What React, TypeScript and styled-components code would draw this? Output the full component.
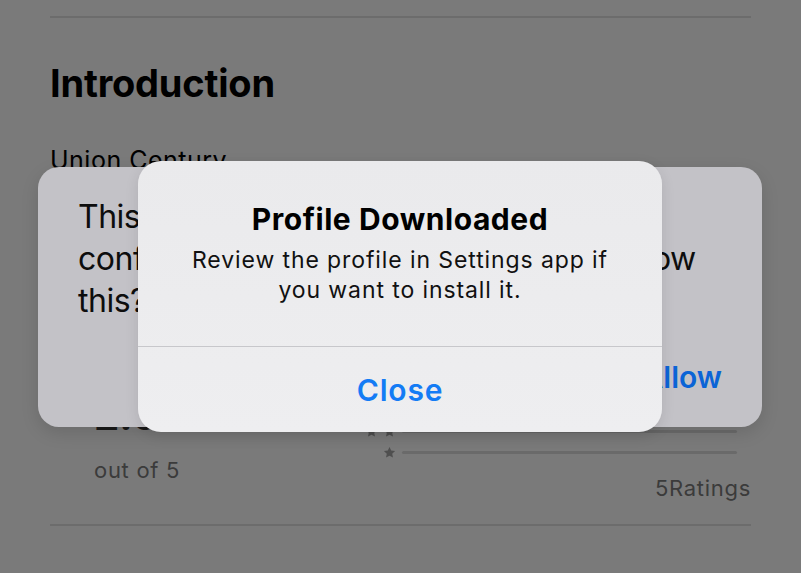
import { createGlobalStyle, styled } from "styled-components";

const GlobalStyle = createGlobalStyle`
  html, body {
    margin: 0;
    padding: 0;
    background: #7a7a7a;
  }
  body {
    font-family: Inter, "Liberation Sans", Arial, sans-serif;
    -webkit-font-smoothing: antialiased;
  }
`;

const Star = () => (
  <svg width="13" height="13" viewBox="0 0 24 24">
    <path
      d="M12 1.8l3.1 6.6 7.2.9-5.3 5 1.4 7.1L12 17.9l-6.4 3.5 1.4-7.1-5.3-5 7.2-.9z"
      fill="#4f4f4f"
    />
  </svg>
);

const starRows = [5, 4, 3, 2, 1];

const App = () => {
  return (
    <Page>
      <GlobalStyle />
      <Rule />
      <Heading>Introduction</Heading>
      <Subtitle>Union Century</Subtitle>

      <RatingSection>
        <ScoreCol>
          <Score>2.0</Score>
          <OutOf>out of 5</OutOf>
        </ScoreCol>
        <BarsCol>
          {starRows.map((n) => (
            <StarRow key={n}>
              <Stars>
                {Array.from({ length: n }).map((_, i) => (
                  <Star key={i} />
                ))}
              </Stars>
              <Bar />
            </StarRow>
          ))}
          <RatingsCount>5Ratings</RatingsCount>
        </BarsCol>
      </RatingSection>
      <Rule $top={22} />

      <BackAlert>
        <BackText>
          This website is trying to download a
          <br />
          configuration profile. Do you want to allow
          <br />
          this?
        </BackText>
        <BackButtons>
          <BackButton>Ignore</BackButton>
          <BackButton $primary>Allow</BackButton>
        </BackButtons>
      </BackAlert>

      <FrontAlert>
        <AlertBody>
          <AlertTitle>Profile Downloaded</AlertTitle>
          <AlertMessage>
            Review the profile in Settings app if
            <br />
            you want to install it.
          </AlertMessage>
        </AlertBody>
        <AlertDivider />
        <AlertButton>Close</AlertButton>
      </FrontAlert>
    </Page>
  );
};

const Page = styled.div`
  position: relative;
  width: 801px;
  height: 573px;
  overflow: hidden;
  box-sizing: border-box;
  padding: 16px 50px 0;
  background: #7a7a7a;
`;

const Rule = styled.div<{ $top?: number }>`
  height: 2px;
  margin-top: ${(p) => p.$top ?? 0}px;
  background: #6c6c6c;
`;

const Heading = styled.h2`
  margin: 42px 0 0;
  font-size: 38px;
  line-height: 46px;
  font-weight: 700;
  letter-spacing: -0.2px;
  color: #000;
`;

const Subtitle = styled.p`
  margin: 40px 0 0;
  font-size: 25px;
  line-height: 29px;
  letter-spacing: 0.5px;
  color: #000;
`;

const RatingSection = styled.div`
  display: flex;
  justify-content: space-between;
  align-items: flex-start;
  margin-top: 183px;
`;

const ScoreCol = styled.div`
  display: flex;
  flex-direction: column;
  align-items: flex-start;
  padding-left: 44px;
  margin-top: 38px;
`;

const Score = styled.div`
  font-size: 40px;
  line-height: 40px;
  font-weight: 700;
  color: #1a1a1a;
`;

const OutOf = styled.div`
  margin-top: 21px;
  font-size: 22px;
  line-height: 27px;
  letter-spacing: 0.7px;
  color: #3b3b3b;
`;

const BarsCol = styled.div`
  display: flex;
  flex-direction: column;
  align-items: flex-end;
`;

const StarRow = styled.div`
  display: flex;
  align-items: center;
  height: 21px;
  padding-right: 14px;
`;

const Stars = styled.div`
  display: flex;
  justify-content: flex-end;
  gap: 5px;
  width: 100px;

  svg {
    display: block;
  }
`;

const Bar = styled.div`
  width: 335px;
  height: 3px;
  margin-left: 6px;
  border-radius: 2px;
  background: #6a6a6a;
`;

const RatingsCount = styled.div`
  margin-top: 12px;
  font-size: 22px;
  line-height: 27px;
  letter-spacing: 0.7px;
  color: #3b3b3b;
`;

const BackAlert = styled.div`
  position: absolute;
  left: 38px;
  top: 167px;
  width: 724px;
  height: 260px;
  box-sizing: border-box;
  padding: 29px 40px 0;
  border-radius: 21px;
  background: #c3c2c7;
  box-shadow: 0 6px 18px rgba(0, 0, 0, 0.12);
  display: flex;
  flex-direction: column;
`;

const BackText = styled.div`
  font-size: 32px;
  line-height: 42px;
  letter-spacing: -0.5px;
  color: #0d0d0d;
  white-space: nowrap;
`;

const BackButtons = styled.div`
  display: flex;
  justify-content: flex-end;
  gap: 60px;
  margin-top: 37px;
`;

const BackButton = styled.div<{ $primary?: boolean }>`
  font-size: 30px;
  line-height: 36px;
  font-weight: ${(p) => (p.$primary ? 600 : 400)};
  color: #0b64d6;
`;

const FrontAlert = styled.div`
  position: absolute;
  left: 138px;
  top: 161px;
  width: 524px;
  height: 271px;
  border-radius: 23px;
  background: linear-gradient(#eaeaec, #eeeef0);
  box-shadow: 0 4px 14px rgba(0, 0, 0, 0.1);
  display: flex;
  flex-direction: column;
  overflow: hidden;
`;

const AlertBody = styled.div`
  height: 185px;
  box-sizing: border-box;
  padding: 40px 10px 0;
  text-align: center;
`;

const AlertTitle = styled.div`
  font-size: 30px;
  line-height: 36px;
  font-weight: 700;
  letter-spacing: 0.55px;
  color: #000;
`;

const AlertMessage = styled.div`
  margin-top: 8px;
  font-size: 23px;
  line-height: 30px;
  letter-spacing: 0.9px;
  color: #111;
`;

const AlertDivider = styled.div`
  height: 1px;
  background: #c7c7cb;
`;

const AlertButton = styled.div`
  flex: 1;
  display: flex;
  align-items: center;
  justify-content: center;
  font-size: 30px;
  font-weight: 600;
  letter-spacing: 0.8px;
  color: #147cf5;
`;

export default App;
